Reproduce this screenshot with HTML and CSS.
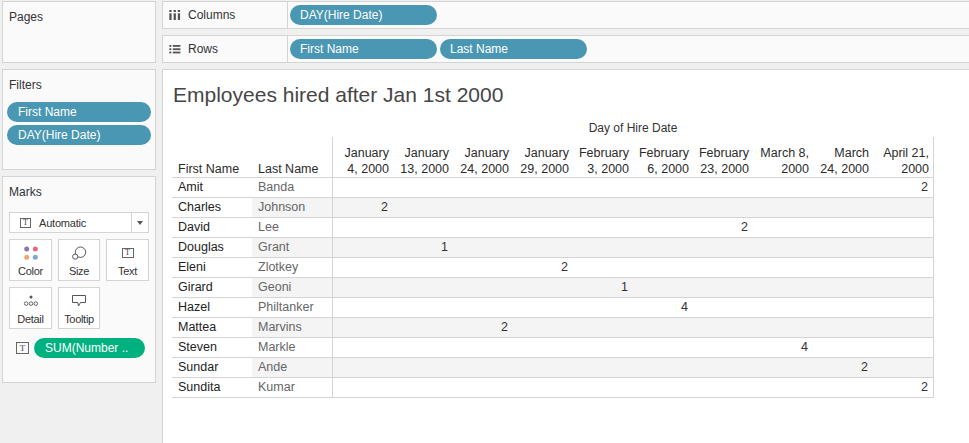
FILE: index.html
```html
<!DOCTYPE html>
<html>
<head>
<meta charset="utf-8">
<title>Employees hired after Jan 1st 2000</title>
<link rel="stylesheet" href="styles.css">
</head>
<body>
<div class="app">
  <aside class="side">
    <section class="card pages">
      <div class="card-title">Pages</div>
    </section>
    <section class="card filters">
      <div class="card-title">Filters</div>
      <div class="filter-list">
        <div class="pill dim">First Name</div>
        <div class="pill dim">DAY(Hire Date)</div>
      </div>
    </section>
    <section class="card marks">
      <div class="card-title">Marks</div>
      <div class="dropdown">
        <span class="t-icon">T</span>
        <span class="dd-label">Automatic</span>
        <span class="dd-arrow"></span>
      </div>
      <div class="mark-grid">
        <div class="mark-btn">
          <svg class="mark-icon" width="16" height="14" viewBox="0 0 16 14">
            <circle cx="3.7" cy="3" r="2.5" fill="#8a78a8"/>
            <circle cx="12.3" cy="3" r="2.5" fill="#e8697b"/>
            <circle cx="3.7" cy="11.2" r="2.5" fill="#f2a472"/>
            <circle cx="12.3" cy="11.2" r="2.5" fill="#82a8d5"/>
          </svg>
          <span class="mark-label">Color</span>
        </div>
        <div class="mark-btn">
          <svg class="mark-icon" width="16" height="14" viewBox="0 0 16 14">
            <circle cx="9.5" cy="6.2" r="5.2" fill="none" stroke="#555" stroke-width="1"/>
            <circle cx="4.2" cy="10.6" r="2.6" fill="#fff" stroke="#555" stroke-width="1"/>
          </svg>
          <span class="mark-label">Size</span>
        </div>
        <div class="mark-btn">
          <span class="mark-icon icon-box"><span class="t-icon">T</span></span>
          <span class="mark-label">Text</span>
        </div>
        <div class="mark-btn">
          <svg class="mark-icon" width="16" height="14" viewBox="0 0 16 14">
            <circle cx="8" cy="3" r="1.5" fill="#555"/>
            <circle cx="3.2" cy="9.6" r="1.8" fill="none" stroke="#555" stroke-width="0.9"/>
            <circle cx="8" cy="9.6" r="1.8" fill="none" stroke="#555" stroke-width="0.9"/>
            <circle cx="12.8" cy="9.6" r="1.8" fill="none" stroke="#555" stroke-width="0.9"/>
          </svg>
          <span class="mark-label">Detail</span>
        </div>
        <div class="mark-btn">
          <svg class="mark-icon" width="16" height="14" viewBox="0 0 16 14">
            <path d="M1.5 1.5 H14.5 V8.5 H9.5 L7.5 12 L6.8 8.5 H1.5 Z" fill="none" stroke="#555" stroke-width="1" stroke-linejoin="round"/>
          </svg>
          <span class="mark-label">Tooltip</span>
        </div>
      </div>
      <div class="mark-field">
        <span class="t-icon big">T</span>
        <div class="pill measure">SUM(Number ..</div>
      </div>
    </section>
  </aside>

  <main class="work">
    <div class="shelf">
      <div class="shelf-label">
        <svg class="shelf-icon" width="12" height="10" viewBox="0 0 12 10">
          <g fill="#555">
            <rect x="0.3" y="0" width="2.3" height="2"/>
            <rect x="0.3" y="3.3" width="2.3" height="6.7"/>
            <rect x="4.6" y="0" width="2.3" height="2"/>
            <rect x="4.6" y="3.3" width="2.3" height="6.7"/>
            <rect x="8.8" y="0" width="2.3" height="2"/>
            <rect x="8.8" y="3.3" width="2.3" height="6.7"/>
          </g>
        </svg>
        <span>Columns</span>
      </div>
      <div class="shelf-pills">
        <div class="pill dim shelf-pill">DAY(Hire Date)</div>
      </div>
    </div>
    <div class="shelf">
      <div class="shelf-label">
        <svg class="shelf-icon" width="12" height="10" viewBox="0 0 12 10">
          <g fill="#555">
            <rect x="0.3" y="1" width="2" height="1.8"/>
            <rect x="3.8" y="1" width="7.6" height="1.8"/>
            <rect x="0.3" y="4.3" width="2" height="1.8"/>
            <rect x="3.8" y="4.3" width="7.6" height="1.8"/>
            <rect x="0.3" y="7.6" width="2" height="1.8"/>
            <rect x="3.8" y="7.6" width="7.6" height="1.8"/>
          </g>
        </svg>
        <span>Rows</span>
      </div>
      <div class="shelf-pills">
        <div class="pill dim shelf-pill">First Name</div>
        <div class="pill dim shelf-pill">Last Name</div>
      </div>
    </div>

    <div class="viz">
      <h1 class="title">Employees hired after Jan 1st 2000</h1>
      <div class="xtab">
        <div class="axis-title">Day of Hire Date</div>
        <div class="row head">
          <div class="rh">First Name</div>
          <div class="rh">Last Name</div>
          <div class="cells">
            <div class="ch">January<br>4, 2000</div>
            <div class="ch">January<br>13, 2000</div>
            <div class="ch">January<br>24, 2000</div>
            <div class="ch">January<br>29, 2000</div>
            <div class="ch">February<br>3, 2000</div>
            <div class="ch">February<br>6, 2000</div>
            <div class="ch">February<br>23, 2000</div>
            <div class="ch">March 8,<br>2000</div>
            <div class="ch">March<br>24, 2000</div>
            <div class="ch">April 21,<br>2000</div>
          </div>
        </div>
        <div class="row"><div class="fn">Amit</div><div class="ln">Banda</div><div class="cells"><span class="v c10">2</span></div></div>
        <div class="row band"><div class="fn">Charles</div><div class="ln">Johnson</div><div class="cells"><span class="v c1">2</span></div></div>
        <div class="row"><div class="fn">David</div><div class="ln">Lee</div><div class="cells"><span class="v c7">2</span></div></div>
        <div class="row band"><div class="fn">Douglas</div><div class="ln">Grant</div><div class="cells"><span class="v c2">1</span></div></div>
        <div class="row"><div class="fn">Eleni</div><div class="ln">Zlotkey</div><div class="cells"><span class="v c4">2</span></div></div>
        <div class="row band"><div class="fn">Girard</div><div class="ln">Geoni</div><div class="cells"><span class="v c5">1</span></div></div>
        <div class="row"><div class="fn">Hazel</div><div class="ln">Philtanker</div><div class="cells"><span class="v c6">4</span></div></div>
        <div class="row band"><div class="fn">Mattea</div><div class="ln">Marvins</div><div class="cells"><span class="v c3">2</span></div></div>
        <div class="row"><div class="fn">Steven</div><div class="ln">Markle</div><div class="cells"><span class="v c8">4</span></div></div>
        <div class="row band"><div class="fn">Sundar</div><div class="ln">Ande</div><div class="cells"><span class="v c9">2</span></div></div>
        <div class="row"><div class="fn">Sundita</div><div class="ln">Kumar</div><div class="cells"><span class="v c10">2</span></div></div>
      </div>
    </div>
  </main>
</div>
</body>
</html>
```

FILE: styles.css
```css
* { box-sizing: border-box; }

html, body {
  margin: 0;
  padding: 0;
}

body {
  width: 969px;
  height: 443px;
  overflow: hidden;
  background: #f0f0f0;
  font-family: "Liberation Sans", Arial, sans-serif;
  color: #333;
}

.app {
  display: flex;
  gap: 6px;
  height: 443px;
  padding: 1px 0 0 2px;
}

/* ---------- left side cards ---------- */
.side {
  width: 154px;
  flex: none;
  display: flex;
  flex-direction: column;
  gap: 6px;
}

.card {
  background: #fafafa;
  border: 1px solid #d4d4d4;
}

.pages { height: 62px; }
.filters { height: 101px; }
.marks { height: 207px; }

.card-title {
  font-size: 12px;
  line-height: 16px;
  padding: 7px 0 0 6px;
  color: #333;
}

.pill {
  height: 20px;
  border-radius: 10px;
  color: #fff;
  font-size: 12px;
  line-height: 20px;
  padding-left: 11px;
  white-space: nowrap;
  overflow: hidden;
}

.pill.dim { background: #4a97b3; }
.pill.measure { background: #00b180; }

.filter-list {
  display: flex;
  flex-direction: column;
  gap: 3px;
  margin: 9px 0 0 4px;
  width: 144px;
}

/* marks */
.dropdown {
  display: flex;
  align-items: center;
  width: 140px;
  height: 21px;
  margin: 12px 0 0 6px;
  background: #fff;
  border: 1px solid #d4d4d4;
  padding-left: 10px;
}

.t-icon {
  display: inline-flex;
  align-items: center;
  justify-content: center;
  width: 11px;
  height: 10px;
  border: 1px solid #666;
  font-family: "Liberation Serif", "Times New Roman", serif;
  font-size: 8px;
  line-height: 1;
  color: #444;
  flex: none;
}

.t-icon.big {
  width: 13px;
  height: 12px;
  font-size: 9px;
}

.dd-label {
  margin-left: 8px;
  font-size: 11px;
  letter-spacing: -0.2px;
  color: #333;
}

.dd-arrow {
  margin-left: auto;
  width: 17px;
  height: 100%;
  border-left: 1px solid #d4d4d4;
  display: flex;
  align-items: center;
  justify-content: center;
}

.dd-arrow::after {
  content: "";
  width: 0;
  height: 0;
  border-left: 3.5px solid transparent;
  border-right: 3.5px solid transparent;
  border-top: 4px solid #555;
}

.mark-grid {
  display: grid;
  grid-template-columns: 43px 42px 43px;
  grid-auto-rows: 42px;
  gap: 6px;
  margin: 6px 0 0 6px;
}

.mark-btn {
  display: flex;
  flex-direction: column;
  align-items: center;
  background: #fff;
  border: 1px solid #d4d4d4;
  padding-top: 6px;
}

.mark-icon {
  display: block;
  width: 16px;
  height: 14px;
  flex: none;
}

.icon-box {
  display: flex;
  align-items: center;
  justify-content: center;
}

.icon-box .t-icon {
  width: 12px;
  height: 10px;
}

.mark-label {
  margin-top: 5px;
  font-size: 11px;
  line-height: 13px;
  letter-spacing: -0.3px;
  color: #333;
}

.mark-field {
  display: flex;
  align-items: center;
  gap: 5px;
  margin: 9px 0 0 13px;
}

.mark-field .pill {
  width: 111px;
}

/* ---------- right side ---------- */
.work {
  flex: 1;
  display: flex;
  flex-direction: column;
  gap: 6px;
  min-width: 0;
}

.shelf {
  display: flex;
  height: 28px;
  background: #fafafa;
  border: 1px solid #d4d4d4;
  border-right: none;
  flex: none;
}

.shelf-label {
  width: 125px;
  flex: none;
  display: flex;
  align-items: center;
  gap: 7px;
  padding-left: 6px;
  border-right: 1px solid #d4d4d4;
  font-size: 12px;
  color: #333;
}

.shelf-icon {
  display: block;
  flex: none;
}

.shelf-pills {
  display: flex;
  align-items: center;
  gap: 3px;
  padding-left: 2px;
}

.shelf-pill {
  width: 147px;
  padding-left: 10px;
}

.viz {
  flex: 1;
  background: #fff;
  border-top: 1px solid #d4d4d4;
  border-left: 1px solid #d4d4d4;
  padding: 13px 0 0 9px;
}

.title {
  margin: 0 0 0 1px;
  font-size: 21px;
  line-height: 24px;
  font-weight: normal;
  color: #464646;
}

/* crosstab */
.xtab {
  margin-top: 12px;
  width: 762px;
  font-size: 12.5px;
}

.axis-title {
  margin-left: 161px;
  width: 600px;
  text-align: center;
  font-size: 12px;
  line-height: 18px;
  color: #333;
}

.row {
  display: grid;
  grid-template-columns: 80px 80px 602px;
  height: 20px;
  border-bottom: 1px solid #d4d4d4;
  line-height: 19px;
}

.row.head {
  height: 41px;
}

.cells {
  display: grid;
  grid-template-columns: repeat(10, 60px);
  border-left: 1px solid #d4d4d4;
  border-right: 1px solid #d4d4d4;
}

.rh {
  align-self: end;
  line-height: 16px;
  padding-left: 6px;
  color: #2b2b2b;
  white-space: nowrap;
}

.ch {
  align-self: end;
  line-height: 16px;
  text-align: right;
  padding-right: 4px;
  color: #2b2b2b;
  white-space: nowrap;
}

.fn {
  padding-left: 6px;
  color: #222;
}

.ln {
  padding-left: 6px;
  color: #666;
}

.band .ln,
.band .cells {
  background: #f4f4f4;
}

.v {
  grid-row: 1;
  text-align: right;
  padding-right: 5px;
  color: #333;
}

.c1 { grid-column: 1; }
.c2 { grid-column: 2; }
.c3 { grid-column: 3; }
.c4 { grid-column: 4; }
.c5 { grid-column: 5; }
.c6 { grid-column: 6; }
.c7 { grid-column: 7; }
.c8 { grid-column: 8; }
.c9 { grid-column: 9; }
.c10 { grid-column: 10; }
```
